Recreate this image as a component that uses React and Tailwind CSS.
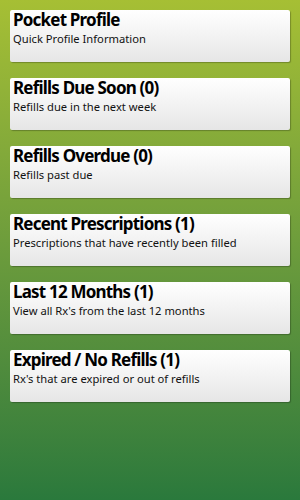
import React from "react";

const items = [
  { title: "Pocket Profile", desc: "Quick Profile Information" },
  { title: "Refills Due Soon (0)", desc: "Refills due in the next week" },
  { title: "Refills Overdue (0)", desc: "Refills past due" },
  { title: "Recent Prescriptions (1)", desc: "Prescriptions that have recently been filled" },
  { title: "Last 12 Months (1)", desc: "View all Rx's from the last 12 months" },
  { title: "Expired / No Refills (1)", desc: "Rx's that are expired or out of refills" },
];

function MenuCard({ title, desc }) {
  return (
    <div className="h-[52px] rounded-[2px] bg-gradient-to-b from-white to-[#e6e6e6] pl-[3px] shadow-[1px_1px_1px_rgba(0,0,0,0.25)]">
      <div className="text-[17px] font-bold leading-[20px] tracking-[-0.8px] text-black">{title}</div>
      <div className="mt-[2px] text-[11.2px] leading-[14px] text-[#111]">{desc}</div>
    </div>
  );
}

export default function App() {
  return (
    <div
      className="flex h-[500px] w-[300px] flex-col gap-4 bg-gradient-to-b from-[#a6bf34] to-[#2a793c] px-[10px] pt-[10px]"
      style={{ fontFamily: '"Noto Sans", "Open Sans", sans-serif' }}
    >
      {items.map((item) => (
        <MenuCard key={item.title} title={item.title} desc={item.desc} />
      ))}
    </div>
  );
}
